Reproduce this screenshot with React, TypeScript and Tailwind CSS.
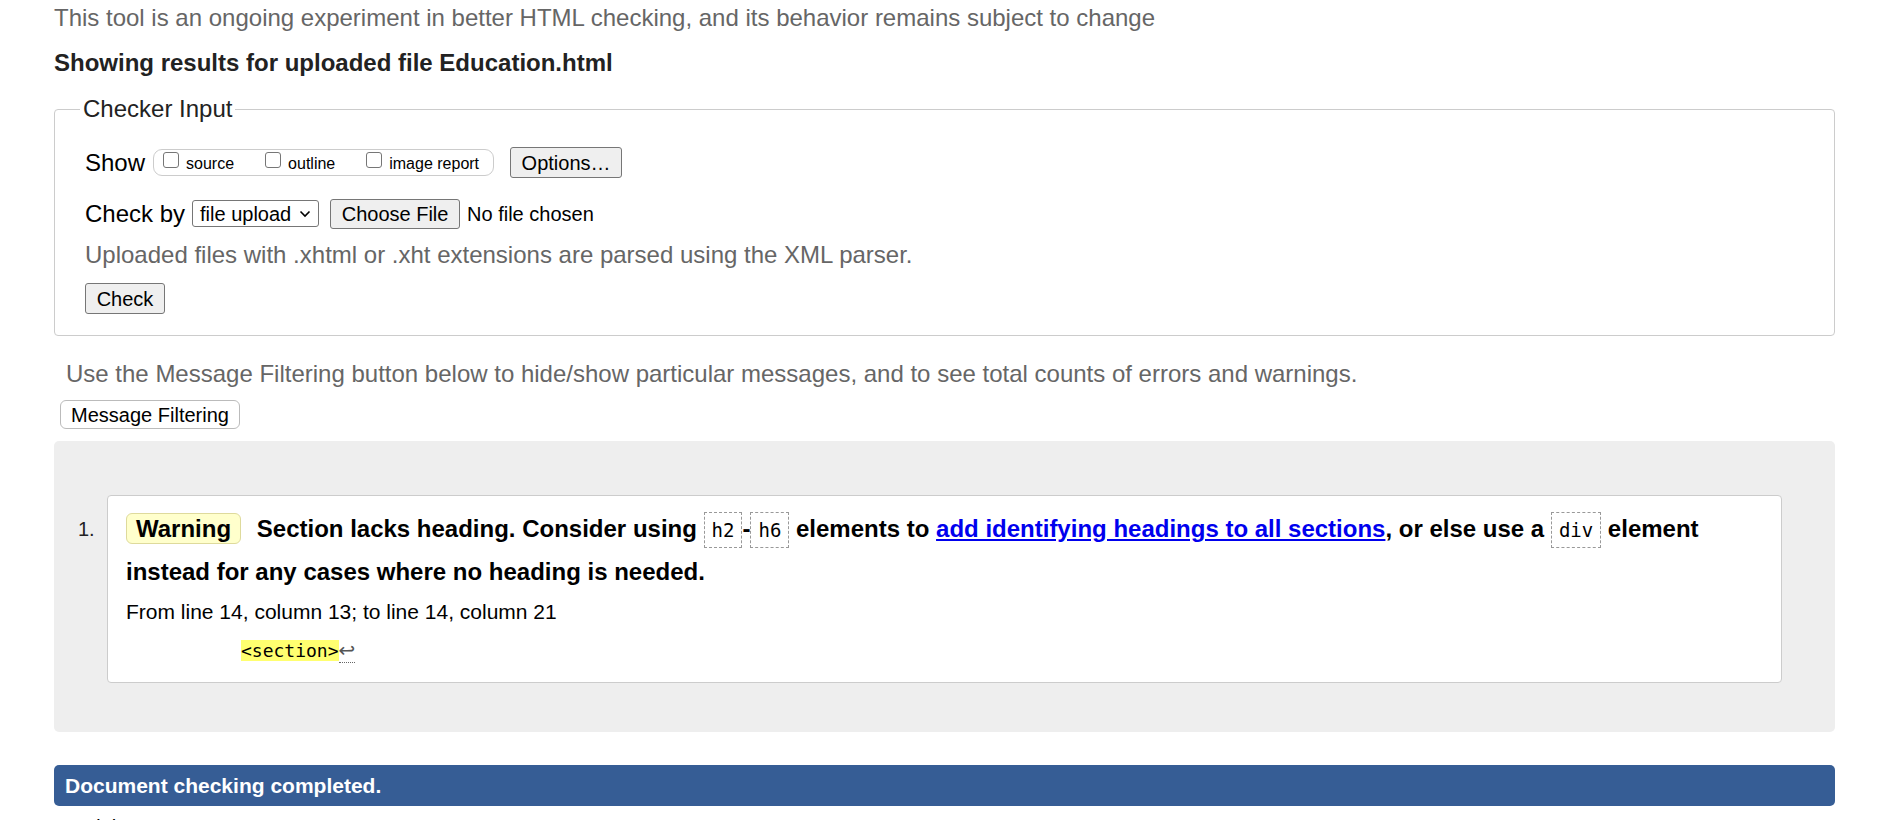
export default function App() {
  const code = "inline-block border border-dashed border-[#999] bg-white px-[7px] py-[5px] font-['DejaVu_Sans_Mono',monospace] text-[19px] font-normal leading-[24px] align-baseline";

  return (
    <div className="min-h-screen bg-white font-['Liberation_Sans',Arial,sans-serif] text-black">
      <div className="pl-[54px] pr-[43px]">
        <p className="pt-[4px] text-[24px] leading-[28px] text-[#666]">
          This tool is an ongoing experiment in better HTML checking, and its behavior remains subject to change
        </p>
        <h2 className="mt-[17px] text-[24px] font-bold leading-[28px] text-[#222]">
          Showing results for uploaded file Education.html
        </h2>

        {/* Checker input */}
        <fieldset className="mt-[18px] rounded-[4px] border border-[#ccc] pb-[21px] pl-[30px] pr-[20px]">
          <legend className="ml-[-5px] px-[3px] text-[24px] leading-[28px] text-[#222]">Checker Input</legend>

          <div className="mt-[24px] flex h-[31px] items-center">
            <span className="text-[24px] leading-[28px]">Show</span>
            <div className="ml-[8px] flex h-[27px] w-[341px] items-center rounded-[9px] border border-[#ccc] pl-[9px] text-[16px]">
              <label className="flex items-center">
                <span className="mb-[5px] h-[16px] w-[16px] rounded-[3px] border border-[#767676] bg-white" />
                <span className="ml-[7px] mt-[3px] leading-[20px]">source</span>
              </label>
              <label className="ml-[31px] flex items-center">
                <span className="mb-[5px] h-[16px] w-[16px] rounded-[3px] border border-[#767676] bg-white" />
                <span className="ml-[7px] mt-[3px] leading-[20px]">outline</span>
              </label>
              <label className="ml-[31px] flex items-center">
                <span className="mb-[5px] h-[16px] w-[16px] rounded-[3px] border border-[#767676] bg-white" />
                <span className="ml-[7px] mt-[3px] leading-[20px]">image report</span>
              </label>
            </div>
            <button className="ml-[16px] h-[31px] w-[112px] rounded-[3px] border border-[#767676] bg-[#efefef] text-[20px] leading-[24px]">
              Options…
            </button>
          </div>

          <div className="mt-[20px] flex h-[31px] items-center">
            <span className="text-[24px] leading-[28px]">Check by</span>
            <div className="ml-[7px] flex h-[27px] w-[127px] items-center justify-between rounded-[3px] border border-[#767676] bg-white pl-[7px] pr-[7px] text-[20px] leading-[24px]">
              <span>file upload</span>
              <svg width="12" height="8" viewBox="0 0 12 8" fill="none">
                <path d="M1.5 1.5l4.5 4.5 4.5-4.5" stroke="#000" strokeWidth="1.6" />
              </svg>
            </div>
            <button className="ml-[11px] h-[30px] w-[130px] rounded-[3px] border border-[#767676] bg-[#efefef] text-[20px] leading-[24px]">
              Choose File
            </button>
            <span className="ml-[7px] text-[20px] leading-[24px]">No file chosen</span>
          </div>

          <p className="mt-[12px] text-[24px] leading-[28px] text-[#666]">
            Uploaded files with .xhtml or .xht extensions are parsed using the XML parser.
          </p>
          <button className="mt-[14px] block h-[31px] w-[80px] rounded-[3px] border border-[#767676] bg-[#efefef] text-[20px] leading-[24px]">
            Check
          </button>
        </fieldset>

        <p className="mt-[24px] pl-[12px] text-[24px] leading-[28px] text-[#666]">
          Use the Message Filtering button below to hide/show particular messages, and to see total counts of errors and warnings.
        </p>
        <button className="ml-[6px] mt-[12px] block h-[29px] w-[180px] rounded-[6px] border border-[#bbb] bg-white text-[20px] leading-[24px]">
          Message Filtering
        </button>

        {/* Results */}
        <div className="mt-[12px] rounded-[5px] bg-[#eee] pb-[49px] pl-[24px] pr-[53px] pt-[54px]">
          <div className="flex items-start">
            <span className="w-[29px] pt-[22px] text-[20px] leading-[24px] text-[#222]">1.</span>
            <div className="flex-1 rounded-[4px] border border-[#ccc] bg-white pb-[19px] pl-[18px] pr-[18px] pt-[11px]">
              <p className="text-[24px] font-bold leading-[43px]">
                <span className="inline-block rounded-[6px] border border-[#deda9c] bg-[#ffffcc] px-[9px] leading-[29px]">Warning</span>
                <span className="ml-[9px]"> Section lacks heading. Consider using </span>
                <code className={code}>h2</code>-<code className={code}>h6</code> elements to{" "}
                <a href="#" className="text-[#0000ee] underline">add identifying headings to all sections</a>, or else use a{" "}
                <code className={code}>div</code> element instead for any cases where no heading is needed.
              </p>
              <p className="mt-[7px] text-[21px] leading-[24px]">From line 14, column 13; to line 14, column 21</p>
              <p className="mt-[14px] font-['DejaVu_Sans_Mono',monospace] text-[18px] leading-[24px]">
                <span className="ml-[115px] bg-[#ffff70]">&lt;section&gt;</span>
                <span className="border-b border-dotted border-[#666] font-['DejaVu_Sans',sans-serif] text-[20px] text-[#555]">↩</span>
              </p>
            </div>
          </div>
        </div>

        <div className="mt-[33px] flex h-[41px] items-center rounded-[5px] bg-[#365d95] pl-[11px] text-[21px] font-bold text-white">
          Document checking completed.
        </div>
        <p className="mt-[9px] text-[20px] leading-[24px]">Used the HTML parser.</p>
      </div>
    </div>
  );
}
